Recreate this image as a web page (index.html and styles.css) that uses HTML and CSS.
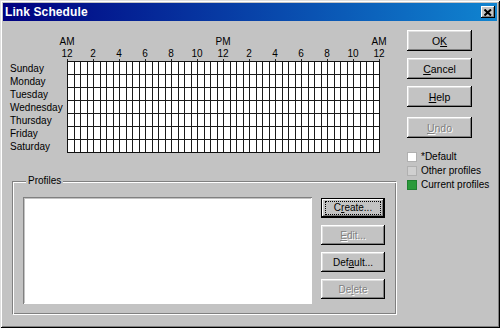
FILE: index.html
```html
<!DOCTYPE html>
<html>
<head>
  <meta charset="UTF-8">
  <title>Link Schedule</title>
  <link rel="stylesheet" href="styles.css">
</head>
<body>
  <div class="window">
    <div class="titlebar">
      <span class="title">Link Schedule</span>
      <button class="close" aria-label="Close">
        <svg width="8" height="7" viewBox="0 0 8 7"><path d="M0.5 0.5 L7 6.5 M7 0.5 L0.5 6.5" stroke="#000" stroke-width="2"/></svg>
      </button>
    </div>

    <div class="dialog">
      <div class="main-col">
        <div class="schedule">
          <div class="ampm"><span>AM</span><span>PM</span><span>AM</span></div>
          <div class="hours">
            <span>12</span><span>2</span><span>4</span><span>6</span><span>8</span><span>10</span>
            <span>12</span><span>2</span><span>4</span><span>6</span><span>8</span><span>10</span><span>12</span>
          </div>
          <div class="week">
            <div class="days">
              <div>Sunday</div>
              <div>Monday</div>
              <div>Tuesday</div>
              <div>Wednesday</div>
              <div>Thursday</div>
              <div>Friday</div>
              <div>Saturday</div>
            </div>
            <div class="grid"></div>
          </div>
        </div>

        <fieldset class="profiles">
          <legend>Profiles</legend>
          <div class="profile-list"></div>
          <div class="profile-buttons">
            <button class="btn default-btn"><span class="focus">C<u>r</u>eate...</span></button>
            <button class="btn" disabled><u>E</u>dit...</button>
            <button class="btn">Def<u>a</u>ult...</button>
            <button class="btn" disabled>De<u>l</u>ete</button>
          </div>
        </fieldset>
      </div>

      <div class="side-col">
        <button class="btn side-btn">O<u>K</u></button>
        <button class="btn side-btn"><u>C</u>ancel</button>
        <button class="btn side-btn"><u>H</u>elp</button>
        <button class="btn side-btn undo" disabled><u>U</u>ndo</button>

        <ul class="key">
          <li><span class="swatch white"></span>*Default</li>
          <li><span class="swatch gray"></span>Other profiles</li>
          <li><span class="swatch green"></span>Current profiles</li>
        </ul>
      </div>
    </div>
  </div>
</body>
</html>
```

FILE: styles.css
```css
body {
  margin: 0;
  font-family: "Liberation Sans", Arial, sans-serif;
  font-size: 10px;
  color: #000;
  background: #c3c3c3;
}

.window {
  width: 500px;
  height: 328px;
  box-sizing: border-box;
  padding: 3px;
  background: #c3c3c3;
  box-shadow: inset 1px 1px #dfdfdf, inset -1px -1px #000,
              inset 2px 2px #fff, inset -2px -2px #808080;
}

/* title bar */
.titlebar {
  height: 18px;
  display: flex;
  align-items: center;
  justify-content: space-between;
  padding: 0 2px 0 2px;
  background: linear-gradient(to right, #000080, #1084d0);
  color: #fff;
}

.title {
  font-weight: bold;
  font-size: 12px;
  letter-spacing: 0.1px;
}

.close {
  width: 14px;
  height: 12px;
  padding: 0;
  border: none;
  display: flex;
  align-items: center;
  justify-content: center;
  background: #c3c3c3;
  box-shadow: inset -1px -1px #000, inset 1px 1px #fff,
              inset -2px -2px #808080;
}

/* layout */
.dialog {
  display: flex;
  gap: 10px;
  padding-left: 7px;
}

.main-col {
  width: 387px;
}

/* schedule grid */
.schedule {
  padding-top: 15px;
}

.ampm {
  display: flex;
  gap: 130px;
  margin-left: 44px;
  height: 13px;
  line-height: 12px;
}

.ampm span,
.hours span {
  width: 26px;
  text-align: center;
}

.hours {
  display: flex;
  margin-left: 44px;
  height: 12px;
  line-height: 10px;
}

.hours span::after {
  content: "";
  display: block;
  width: 1px;
  height: 2px;
  margin: 0 auto;
  background: #222;
}

.week {
  display: flex;
}

.days {
  width: 57px;
  padding-top: 1px;
  line-height: 13px;
}

/* 48 half-hour columns, alternating 7px / 6px */
.grid {
  width: 311px;
  height: 90px;
  border: 1px solid #111;
  background-color: #fff;
  background-image:
    repeating-linear-gradient(to bottom, transparent 0 12px, #1a1a1a 12px 13px),
    repeating-linear-gradient(to right, transparent 0 6px, #1a1a1a 6px 7px,
                              transparent 7px 12px, #1a1a1a 12px 13px);
}

/* profiles group: etched frame */
.profiles {
  margin: 22px 0 0 2px;
  padding: 10px 8px 7px 10px;
  width: 385px;
  height: 140px;
  box-sizing: border-box;
  border: 1px solid;
  border-color: #808080 #fff #fff #808080;
  box-shadow: inset 1px 1px #fff, inset -1px -1px #808080;
  display: flex;
  gap: 9px;
}

.profiles legend {
  position: relative;
  padding: 0 2px;
  margin-left: 3px;
  line-height: 12px;
  background: #c3c3c3;
}

.profile-list {
  width: 289px;
  height: 107px;
  box-sizing: border-box;
  background: #fff;
  box-shadow: inset 1px 1px #808080, inset -1px -1px #fff,
              inset 2px 2px #c3c3c3;
}

.profile-buttons {
  display: flex;
  flex-direction: column;
  gap: 7px;
  padding-top: 1px;
}

/* buttons */
.btn {
  width: 64px;
  height: 20px;
  padding: 0;
  border: none;
  font-family: inherit;
  font-size: 10px;
  color: #000;
  background: #c3c3c3;
  box-shadow: inset -1px -1px #000, inset 1px 1px #fff,
              inset -2px -2px #808080, inset 2px 2px #dfdfdf;
}

.btn:disabled {
  color: #808080;
  text-shadow: 1px 1px #fff;
}

.default-btn {
  outline: 1px solid #000;
  outline-offset: -1px;
  box-shadow: inset -2px -2px #000, inset 2px 2px #fff,
              inset -3px -3px #808080;
}

.default-btn .focus {
  display: block;
  margin: 0 4px;
  line-height: 12px;
  border: 1px dotted #000;
}

.side-col {
  padding-top: 9px;
  display: flex;
  flex-direction: column;
  gap: 7px;
}

.side-btn {
  width: 65px;
  height: 21px;
  font-size: 10.5px;
}

.undo {
  margin-top: 3px;
}

.key {
  list-style: none;
  margin: 5px 0 0;
  padding: 0;
  line-height: 14px;
}

.key li {
  display: flex;
  align-items: center;
  gap: 4px;
  white-space: nowrap;
}

.swatch {
  width: 10px;
  height: 10px;
  box-sizing: border-box;
  border: 1px solid #b0b0b0;
}

.swatch.white {
  background: #fff;
}

.swatch.gray {
  background: #d0d0d0;
}

.swatch.green {
  background: #2a9a3a;
  border-color: #208030;
}
```
